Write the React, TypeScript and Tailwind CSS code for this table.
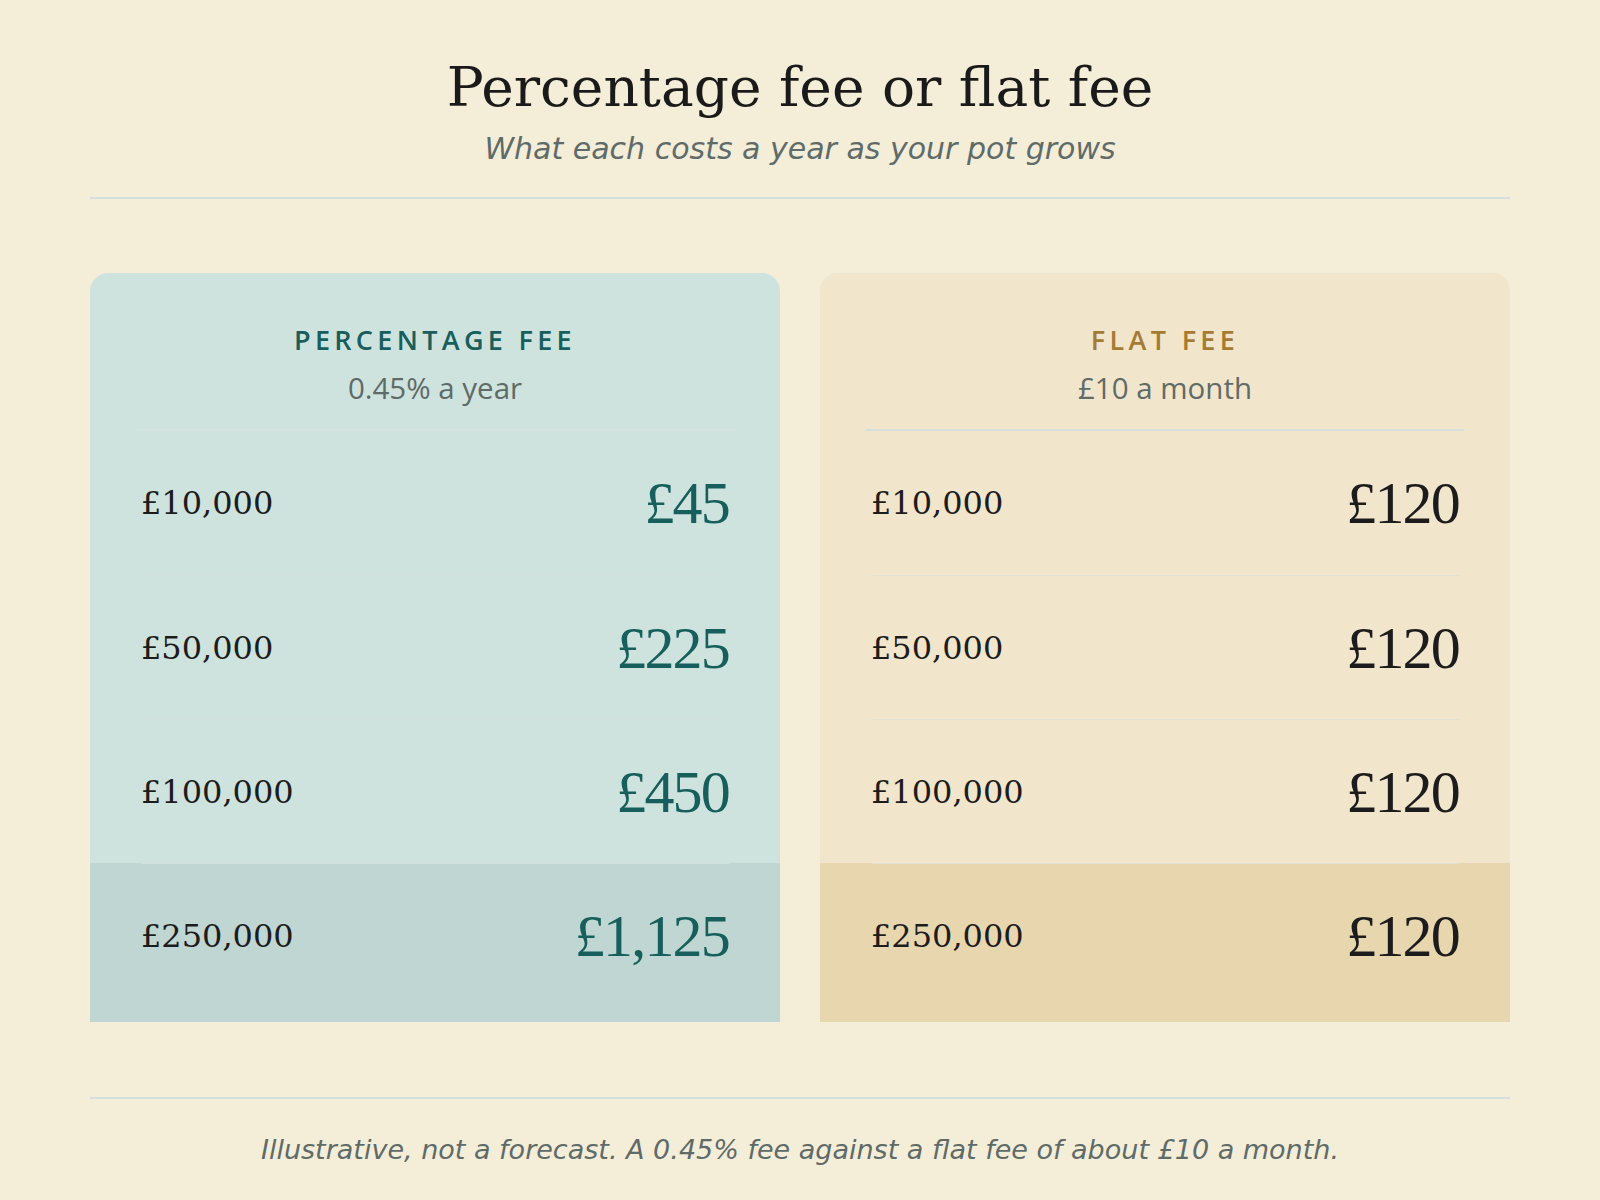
import React from 'react';

const rows = [
  { pot: '£10,000', pct: '£45' },
  { pot: '£50,000', pct: '£225' },
  { pot: '£100,000', pct: '£450' },
  { pot: '£250,000', pct: '£1,125' },
];

const serif = "font-['DejaVu_Serif',serif]";
const valueSerif = "font-['Liberation_Serif',serif]";
const sans = "font-['Open_Sans',sans-serif]";
const wideSans = "font-['DejaVu_Sans',sans-serif]";

function FeeCard({ variant }: { variant: 'pct' | 'flat' }) {
  const isPct = variant === 'pct';
  return (
    <div className={`rounded-t-[18px] overflow-hidden ${isPct ? 'bg-[#cfe3de]' : 'bg-[#f1e5cb]'}`}>
      {/* Card header */}
      <div className="px-[46px]">
        <div className={`pt-[51px] pb-[24px] text-center border-b-2 ${isPct ? 'border-[#d3e4df]' : 'border-[#d6dfdc]'}`}>
          <div className={`${sans} text-[27px] leading-[1.2] font-semibold tracking-[0.16em] ${isPct ? 'text-[#175e5c]' : 'text-[#a57b34]'}`}>
            {isPct ? 'PERCENTAGE FEE' : 'FLAT FEE'}
          </div>
          <div className={`${sans} mt-[14px] text-[29.5px] leading-[1.2] text-[#5f6b67]`}>
            {isPct ? '0.45% a year' : '£10 a month'}
          </div>
        </div>
      </div>

      {/* Rows */}
      {rows.map((r, i) => {
        const last = i === rows.length - 1;
        return (
          <div
            key={r.pot}
            className={`px-[51px] ${last ? (isPct ? 'bg-[#bfd6d2] pb-[15px]' : 'bg-[#e8d6af] pb-[15px]') : ''}`}
          >
            <div
              className={`h-[144px] flex items-center justify-between ${
                i > 0 ? (isPct ? 'border-t border-[#d2e3de]' : 'border-t border-[#e0e0d4]') : ''
              }`}
            >
              <span className={`${serif} text-[32px] text-[#1c1c1c]`}>{r.pot}</span>
              <span
                className={`${valueSerif} text-[60px] leading-none tracking-[-0.03em] ${
                  isPct ? 'text-[#165f5c]' : 'text-[#1c1c1c]'
                }`}
              >
                {isPct ? r.pct : '£120'}
              </span>
            </div>
          </div>
        );
      })}
    </div>
  );
}

export default function App() {
  return (
    <div className="min-h-screen bg-[#f4edd8] px-[90px] pt-[57px] pb-[40px]">
      {/* Header */}
      <header className="text-center pb-[30px] border-b-2 border-[#d5dfdd]">
        <h1 className={`${serif} text-[55px] leading-[1.1] text-[#1a1a1a]`}>Percentage fee or flat fee</h1>
        <p className={`${wideSans} italic mt-[13px] text-[30px] leading-[1.2] text-[#5e6b68]`}>
          What each costs a year as your pot grows
        </p>
      </header>

      {/* Comparison cards */}
      <div className="grid grid-cols-2 gap-10 mt-[74px]">
        <FeeCard variant="pct" />
        <FeeCard variant="flat" />
      </div>

      {/* Footer */}
      <footer className="mt-[75px] border-t-2 border-[#d5dfdd] pt-[35px] text-center">
        <p className={`${wideSans} italic text-[27px] leading-[1.2] text-[#5e6b68]`}>
          Illustrative, not a forecast. A 0.45% fee against a flat fee of about £10 a month.
        </p>
      </footer>
    </div>
  );
}
